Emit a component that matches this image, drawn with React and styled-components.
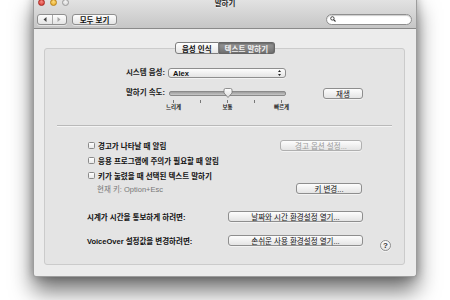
import React from 'react';
import styled, { createGlobalStyle, css } from 'styled-components';

const GlobalStyle = createGlobalStyle`
  html, body {
    margin: 0;
    padding: 0;
    background: #ffffff;
  }
  body {
    font-family: "Liberation Sans", "Noto Sans CJK KR", sans-serif;
    font-size: 7.5px;
    color: #111;
    overflow: hidden;
  }
`;

const Page = styled.div`
  width: 450px;
  height: 300px;
  padding-left: 33px;
  box-sizing: border-box;
  overflow: hidden;
`;

const Window = styled.div`
  width: 384px;
  height: 282px;
  margin-top: -5px;
  box-sizing: border-box;
  display: flex;
  flex-direction: column;
  border: 1px solid #9d9d9d;
  border-top: none;
  border-radius: 0 0 3px 3px;
  background: #ececec;
  box-shadow: 0 14px 22px rgba(0, 0, 0, 0.55), 0 0 10px rgba(0, 0, 0, 0.28);
`;

const Chrome = styled.div`
  background: linear-gradient(#e7e7e7, #c6c6c6);
  border-bottom: 1px solid #8a8a8a;
`;

const TitleBar = styled.div`
  height: 15px;
  display: grid;
  grid-template-columns: 1fr auto 1fr;
  align-items: center;
  padding: 0 4px;
`;

const Lights = styled.div`
  display: flex;
  gap: 5px;
`;

const lightColors = {
  red: ['#f58a83', '#d3332b', '#a82620'],
  yellow: ['#fbd97c', '#e6a824', '#b88118'],
  gray: ['#f3f3f3', '#d2d2d2', '#9a9a9a'],
};

const Light = styled.span`
  width: 7px;
  height: 7px;
  border-radius: 50%;
  box-sizing: border-box;
  border: 0.5px solid ${p => lightColors[p.$c][2]};
  background: radial-gradient(circle at 50% 35%, ${p => lightColors[p.$c][0]}, ${p => lightColors[p.$c][1]});
`;

const Title = styled.div`
  font-size: 7.5px;
  font-weight: bold;
  color: #2a2a2a;
  text-shadow: 0 1px 0 rgba(255, 255, 255, 0.6);
`;

const Toolbar = styled.div`
  height: 18px;
  display: flex;
  align-items: center;
  padding: 0 4px 0 3px;
  gap: 5px;
`;

const btnFace = css`
  background: linear-gradient(#fdfdfd, #e4e4e4);
  border: 1px solid #8e8e8e;
  border-radius: 3px;
  box-sizing: border-box;
  box-shadow: 0 1px 0 rgba(255, 255, 255, 0.5);
`;

const NavGroup = styled.div`
  ${btnFace};
  width: 30px;
  height: 11px;
  display: flex;
`;

const NavBtn = styled.div`
  flex: 1;
  display: flex;
  align-items: center;
  justify-content: center;
  & + & {
    border-left: 1px solid #a8a8a8;
  }
`;

const ToolButton = styled.div`
  ${btnFace};
  width: 45px;
  height: 11px;
  display: flex;
  align-items: center;
  justify-content: center;
  font-size: 7.5px;
  font-weight: bold;
`;

const Search = styled.div`
  margin-left: auto;
  width: 86px;
  height: 11px;
  box-sizing: border-box;
  border: 1px solid #8e8e8e;
  border-radius: 6px;
  background: #fff;
  box-shadow: inset 0 1px 1px rgba(0, 0, 0, 0.2);
  display: flex;
  align-items: center;
  padding-left: 3px;
`;

const Content = styled.div`
  flex: 1;
  display: flex;
  flex-direction: column;
  padding: 13px 11px 11px 10px;
`;

const Tabs = styled.div`
  align-self: center;
  display: flex;
  height: 12px;
  position: relative;
  z-index: 1;
  margin-left: 1px;
`;

const Tab = styled.div`
  padding: 0 6px;
  display: flex;
  align-items: center;
  font-size: 7.5px;
  font-weight: bold;
  box-sizing: border-box;
  border: 1px solid #7d7d7d;
  ${p => p.$active ? css`
    background: linear-gradient(#9a9a9a, #707070);
    color: #f2f2f2;
    border-color: #666;
    box-shadow: inset 0 1px 2px rgba(0, 0, 0, 0.35);
  ` : css`
    background: linear-gradient(#ffffff, #e6e6e6);
    color: #111;
  `}
  &:first-child {
    border-radius: 3px 0 0 3px;
  }
  &:last-child {
    border-radius: 0 3px 3px 0;
    border-left: none;
  }
`;

const GroupBox = styled.div`
  flex: 1;
  margin-top: -6px;
  background: #e4e4e4;
  border: 1px solid #cbcbcb;
  border-radius: 3px;
  display: flex;
  flex-direction: column;
  padding-top: 19px;
`;

const FormRow = styled.div`
  display: flex;
  align-items: flex-start;
  margin-top: ${p => p.$top || 0}px;
`;

const FormLabel = styled.div`
  width: 120px;
  text-align: right;
  line-height: 10px;
  font-weight: bold;
  color: #1a1a1a;
`;

const Popup = styled.div`
  ${btnFace};
  margin-left: 3px;
  width: 118px;
  height: 10px;
  display: flex;
  align-items: center;
  justify-content: space-between;
  padding: 0 4px 0 4px;
  font-weight: bold;
  font-size: 7.5px;
`;

const SliderBlock = styled.div`
  margin-left: 4px;
  width: 117px;
  display: flex;
  flex-direction: column;
`;

const TrackArea = styled.div`
  position: relative;
  height: 10px;
  display: flex;
  align-items: center;
`;

const Track = styled.div`
  flex: 1;
  height: 3px;
  border-radius: 2px;
  background: linear-gradient(#9c9c9c, #c8c8c8);
  border: 0.5px solid #8a8a8a;
`;

const Knob = styled.svg`
  position: absolute;
  top: 0;
  transform: translateX(-50%);
`;

const Ticks = styled.div`
  display: flex;
  justify-content: space-between;
  padding: 0 4px;
  margin-top: 2px;
`;

const TickCol = styled.div`
  width: 1px;
  display: flex;
  flex-direction: column;
  align-items: center;
`;

const TickMark = styled.span`
  width: 1px;
  height: 3px;
  background: #777;
`;

const TickLabel = styled.span`
  font-size: 5.5px;
  font-weight: bold;
  white-space: nowrap;
  margin-top: 0;
  line-height: 8px;
  color: #222;
`;

const PushButton = styled.div`
  ${btnFace};
  width: ${p => p.$w}px;
  height: 11px;
  display: flex;
  align-items: center;
  justify-content: center;
  font-size: 7.5px;
  margin-left: ${p => p.$ml || 0}px;
  color: ${p => p.$disabled ? '#9a9a9a' : '#111'};
  border-color: ${p => p.$disabled ? '#b0b0b0' : '#8e8e8e'};
`;

const Separator = styled.div`
  height: 1px;
  background: #b9b9b9;
  border-bottom: 1px solid #f4f4f4;
  margin: 14px 12px 0 12px;
`;

const Options = styled.div`
  display: flex;
  flex-direction: column;
  padding: 0 42px 0 43px;
  margin-top: 13px;
`;

const OptionRow = styled.div`
  height: 11px;
  display: flex;
  align-items: center;
  justify-content: space-between;
  margin-top: ${p => p.$gap || 0}px;
`;

const CheckLabel = styled.label`
  display: flex;
  align-items: center;
  gap: 3px;
  font-size: 7.5px;
  font-weight: bold;
`;

const CheckBox = styled.span`
  width: 7px;
  height: 7px;
  box-sizing: border-box;
  border: 1px solid #8a8a8a;
  border-radius: 1.5px;
  background: linear-gradient(#ffffff, #e8e8e8);
`;

const Hint = styled.span`
  color: #777;
  padding-left: 9px;
  font-size: 7.5px;
`;

const Links = styled.div`
  display: flex;
  flex-direction: column;
  gap: 13px;
  padding: 0 13px 0 42px;
  margin-top: 17px;
`;

const LinkRow = styled.div`
  display: flex;
  align-items: center;
`;

const LinkLabel = styled.div`
  width: 141px;
  font-size: 7.5px;
  font-weight: bold;
`;

const Help = styled.div`
  ${btnFace};
  margin-left: auto;
  align-self: flex-end;
  margin-bottom: -5px;
  width: 11px;
  height: 11px;
  border-radius: 50%;
  display: flex;
  align-items: center;
  justify-content: center;
  font-size: 8px;
  font-weight: bold;
  color: #333;
`;

const Arrow = ({ dir, color }) => (
  <svg width="4" height="5" viewBox="0 0 4 5">
    <path d={dir === 'left' ? 'M3.5 0 L0.5 2.5 L3.5 5 Z' : 'M0.5 0 L3.5 2.5 L0.5 5 Z'} fill={color} />
  </svg>
);

const SearchIcon = () => (
  <svg width="6" height="6" viewBox="0 0 6 6">
    <circle cx="2.4" cy="2.4" r="1.7" fill="none" stroke="#333" strokeWidth="0.9" />
    <path d="M3.6 3.6 L5.5 5.5" stroke="#333" strokeWidth="1.1" />
  </svg>
);

const UpDown = () => (
  <svg width="3" height="6" viewBox="0 0 3 6">
    <path d="M1.5 0 L3 2 H0 Z M0 4 H3 L1.5 6 Z" fill="#222" />
  </svg>
);

const ticks = [
  { label: '느리게' },
  {},
  { label: '보통' },
  {},
  { label: '빠르게' },
];

export default function App() {
  const speed = 50;

  return (
    <Page>
      <GlobalStyle />
      <Window>
        <Chrome>
          <TitleBar>
            <Lights>
              <Light $c="red" />
              <Light $c="yellow" />
              <Light $c="gray" />
            </Lights>
            <Title>말하기</Title>
            <span />
          </TitleBar>
          <Toolbar>
            <NavGroup>
              <NavBtn><Arrow dir="left" color="#444" /></NavBtn>
              <NavBtn><Arrow dir="right" color="#a5a5a5" /></NavBtn>
            </NavGroup>
            <ToolButton>모두 보기</ToolButton>
            <Search><SearchIcon /></Search>
          </Toolbar>
        </Chrome>

        <Content>
          <Tabs>
            <Tab>음성 인식</Tab>
            <Tab $active>텍스트 말하기</Tab>
          </Tabs>
          <GroupBox>
            <FormRow>
              <FormLabel>시스템 음성:</FormLabel>
              <Popup>Alex<UpDown /></Popup>
            </FormRow>

            <FormRow $top={10}>
              <FormLabel>말하기 속도:</FormLabel>
              <SliderBlock>
                <TrackArea>
                  <Track />
                  <Knob width="10" height="10" viewBox="0 0 10 10" style={{ left: `${speed}%` }}>
                    <defs>
                      <linearGradient id="knob" x1="0" y1="0" x2="0" y2="1">
                        <stop offset="0" stopColor="#ffffff" />
                        <stop offset="1" stopColor="#dcdcdc" />
                      </linearGradient>
                    </defs>
                    <path d="M1 2 Q1 0.5 2.5 0.5 H7.5 Q9 0.5 9 2 V5 L5 9.5 L1 5 Z" fill="url(#knob)" stroke="#777" strokeWidth="0.8" />
                  </Knob>
                </TrackArea>
                <Ticks>
                  {ticks.map((t, i) => (
                    <TickCol key={i}>
                      <TickMark />
                      {t.label && <TickLabel>{t.label}</TickLabel>}
                    </TickCol>
                  ))}
                </Ticks>
              </SliderBlock>
              <PushButton $w={40} $ml={37}>재생</PushButton>
            </FormRow>

            <Separator />

            <Options>
              <OptionRow>
                <CheckLabel><CheckBox />경고가 나타날 때 알림</CheckLabel>
                <PushButton $w={82} $disabled>경고 옵션 설정...</PushButton>
              </OptionRow>
              <OptionRow $gap={4}>
                <CheckLabel><CheckBox />응용 프로그램에 주의가 필요할 때 알림</CheckLabel>
              </OptionRow>
              <OptionRow $gap={4}>
                <CheckLabel><CheckBox />키가 눌렸을 때 선택된 텍스트 말하기</CheckLabel>
              </OptionRow>
              <OptionRow $gap={2}>
                <Hint>현재 키: Option+Esc</Hint>
                <PushButton $w={66}>키 변경...</PushButton>
              </OptionRow>
            </Options>

            <Links>
              <LinkRow>
                <LinkLabel>시계가 시간을 통보하게 하려면:</LinkLabel>
                <PushButton $w={135}>날짜와 시간 환경설정 열기...</PushButton>
              </LinkRow>
              <LinkRow>
                <LinkLabel>VoiceOver 설정값을 변경하려면:</LinkLabel>
                <PushButton $w={135}>손쉬운 사용 환경설정 열기...</PushButton>
                <Help>?</Help>
              </LinkRow>
            </Links>
          </GroupBox>
        </Content>
      </Window>
    </Page>
  );
}
